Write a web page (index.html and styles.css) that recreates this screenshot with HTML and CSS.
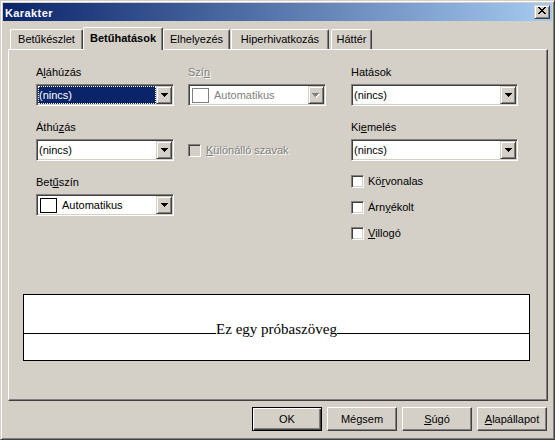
FILE: index.html
```html
<!DOCTYPE html>
<html lang="hu">
<head>
<meta charset="utf-8">
<title>Karakter</title>
<link rel="stylesheet" href="styles.css">
</head>
<body>
<div class="window">
  <div class="titlebar">
    <span class="title">Karakter</span>
    <button class="close" type="button">
      <svg width="8" height="7" viewBox="0 0 8 7"><path d="M0 0h2v1H0zM6 0h2v1H6zM1 1h2v1H1zM5 1h2v1H5zM2 2h4v1H2zM3 3h2v1H3zM2 4h4v1H2zM1 5h2v1H1zM5 5h2v1H5zM0 6h2v1H0zM6 6h2v1H6z"/></svg>
    </button>
  </div>

  <div class="tabs">
    <div class="tab tab-1">Betűkészlet</div>
    <div class="tab tab-2 active">Betűhatások</div>
    <div class="tab tab-3">Elhelyezés</div>
    <div class="tab tab-4">Hiperhivatkozás</div>
    <div class="tab tab-5">Háttér</div>
  </div>

  <div class="panel">
    <div class="fields">
      <div class="col col-1">
        <div class="field">
          <span class="label">A<u>l</u>áhúzás</span>
          <div class="combo">
            <span class="value selected">(nincs)</span>
            <span class="drop"><svg width="7" height="4" viewBox="0 0 7 4"><path d="M0 0h7v1H0zM1 1h5v1H1zM2 2h3v1H2zM3 3h1v1H3z"/></svg></span>
          </div>
        </div>
        <div class="field">
          <span class="label">Áthú<u>z</u>ás</span>
          <div class="combo">
            <span class="value">(nincs)</span>
            <span class="drop"><svg width="7" height="4" viewBox="0 0 7 4"><path d="M0 0h7v1H0zM1 1h5v1H1zM2 2h3v1H2zM3 3h1v1H3z"/></svg></span>
          </div>
        </div>
        <div class="field">
          <span class="label">Bet<u>ű</u>szín</span>
          <div class="combo">
            <span class="value"><span class="swatch"></span>Automatikus</span>
            <span class="drop"><svg width="7" height="4" viewBox="0 0 7 4"><path d="M0 0h7v1H0zM1 1h5v1H1zM2 2h3v1H2zM3 3h1v1H3z"/></svg></span>
          </div>
        </div>
      </div>

      <div class="col col-2">
        <div class="field">
          <span class="label disabled">Szí<u>n</u></span>
          <div class="combo">
            <span class="value muted"><span class="swatch swatch-off"></span>Automatikus</span>
            <span class="drop"><svg width="8" height="5" viewBox="0 0 8 5"><path fill="#fff" d="M1 1h7v1H1zM2 2h5v1H2zM3 3h3v1H3zM4 4h1v1H4z"/><path fill="#808080" d="M0 0h7v1H0zM1 1h5v1H1zM2 2h3v1H2zM3 3h1v1H3z"/></svg></span>
          </div>
        </div>
        <div class="check check-words">
          <span class="box box-off"></span>
          <span class="disabled"><u>K</u>ülönálló szavak</span>
        </div>
      </div>

      <div class="col col-3">
        <div class="field">
          <span class="label">Hatások</span>
          <div class="combo">
            <span class="value">(nincs)</span>
            <span class="drop"><svg width="7" height="4" viewBox="0 0 7 4"><path d="M0 0h7v1H0zM1 1h5v1H1zM2 2h3v1H2zM3 3h1v1H3z"/></svg></span>
          </div>
        </div>
        <div class="field">
          <span class="label">Ki<u>e</u>melés</span>
          <div class="combo">
            <span class="value">(nincs)</span>
            <span class="drop"><svg width="7" height="4" viewBox="0 0 7 4"><path d="M0 0h7v1H0zM1 1h5v1H1zM2 2h3v1H2zM3 3h1v1H3z"/></svg></span>
          </div>
        </div>
        <div class="checks">
          <div class="check"><span class="box"></span><span>Kö<u>r</u>vonalas</span></div>
          <div class="check"><span class="box"></span><span>Árn<u>y</u>ékolt</span></div>
          <div class="check"><span class="box"></span><span><u>V</u>illogó</span></div>
        </div>
      </div>
    </div>

    <div class="preview">
      <div class="baseline">
        <span class="rule"></span>
        <span class="sample">Ez egy próbaszöveg</span>
        <span class="rule"></span>
      </div>
    </div>
  </div>

  <div class="buttons">
    <button class="btn default" type="button">OK</button>
    <button class="btn" type="button">Mégsem</button>
    <button class="btn" type="button"><u>S</u>úgó</button>
    <button class="btn" type="button"><u>A</u>lapállapot</button>
  </div>
</div>
</body>
</html>
```

FILE: styles.css
```css
html, body {
  margin: 0;
  padding: 0;
  background: #d4d0c8;
}

body {
  font-family: "Liberation Sans", Arial, sans-serif;
  font-size: 11px;
  color: #000;
}

u {
  text-decoration: underline;
  text-underline-offset: 1px;
}

.window {
  width: 555px;
  height: 440px;
  box-sizing: border-box;
  border: 1px solid;
  border-color: #d4d0c8 #404040 #404040 #d4d0c8;
  box-shadow: inset 1px 1px #fff, inset -1px -1px #808080;
  padding: 2px;
  display: flex;
  flex-direction: column;
  background: #d4d0c8;
}

/* title bar */
.titlebar {
  height: 18px;
  flex: none;
  display: flex;
  align-items: center;
  justify-content: space-between;
  padding: 0 2px;
  background: linear-gradient(to right, #0a246a, #a6caf0);
}

.title {
  color: #fff;
  font-weight: bold;
  font-size: 11px;
  letter-spacing: 0.4px;
  line-height: 16px;
  padding-top: 2px;
}

.close {
  width: 16px;
  height: 14px;
  box-sizing: border-box;
  margin: 0;
  padding: 1px 0 0 0;
  border: 1px solid;
  border-color: #d4d0c8 #404040 #404040 #d4d0c8;
  box-shadow: inset 1px 1px #fff, inset -1px -1px #808080;
  background: #d4d0c8;
  display: flex;
  align-items: flex-start;
  justify-content: center;
}

.close svg {
  display: block;
  fill: #000;
}

/* tabs */
.tabs {
  flex: none;
  display: flex;
  align-items: flex-end;
  height: 22px;
  margin-top: 6px;
  padding-left: 7px;
}

.tab {
  box-sizing: border-box;
  height: 20px;
  padding-top: 3px;
  line-height: 13px;
  text-align: center;
  white-space: nowrap;
  background: #d4d0c8;
  border-top: 1px solid #fff;
  border-left: 1px solid #fff;
  border-right: 1px solid #404040;
  border-radius: 2px 2px 0 0;
  box-shadow: inset -1px 0 #808080;
}

.tab-1 { width: 73px; }
.tab-2 { width: 80px; }
.tab-3 { width: 67px; }
.tab-4 { width: 98px; margin-left: 1px; }
.tab-5 { width: 41px; margin-left: 2px; }

.tab.active {
  height: 23px;
  margin-bottom: -1px;
  padding-top: 4px;
  font-weight: bold;
  position: relative;
  z-index: 1;
}

/* panel */
.panel {
  flex: none;
  box-sizing: border-box;
  width: 540px;
  height: 352px;
  margin-left: 5px;
  padding: 16px 0 0 14px;
  border-top: 1px solid #fff;
  border-left: 1px solid #fff;
  border-right: 1px solid #404040;
  border-bottom: 1px solid #404040;
  box-shadow: inset -1px -1px #808080;
}

.fields {
  display: flex;
  align-items: flex-start;
  margin-left: 13px;
  height: 174px;
}

.col {
  display: flex;
  flex-direction: column;
  gap: 15px;
}

.col-1 { width: 138px; }
.col-2 { width: 138px; margin-left: 14px; gap: 0; }
.col-3 { width: 167px; margin-left: 25px; gap: 15px; }

.field {
  display: flex;
  flex-direction: column;
  gap: 5px;
}

.label {
  line-height: 13px;
  white-space: nowrap;
}

.disabled {
  color: #808080;
  text-shadow: 1px 1px #fff;
}

/* combo box */
.combo {
  box-sizing: border-box;
  height: 22px;
  padding: 1px;
  display: flex;
  background: #fff;
  border: 1px solid;
  border-color: #808080 #fff #fff #808080;
  box-shadow: inset 1px 1px #404040, inset -1px -1px #d4d0c8;
}

.value {
  flex: 1;
  display: flex;
  align-items: center;
  gap: 5px;
  line-height: 16px;
  border: 1px solid transparent;
  white-space: nowrap;
  overflow: hidden;
}

.value.selected {
  background: #0a246a;
  color: #fff;
  border: 1px dotted #fff;
}

.value.muted {
  color: #808080;
}

.swatch {
  flex: none;
  box-sizing: border-box;
  width: 17px;
  height: 15px;
  margin-left: 1px;
  border: 1px solid #000;
  background: #fff;
}

.swatch.swatch-off {
  border-color: #808080;
}

.drop {
  flex: none;
  box-sizing: border-box;
  width: 16px;
  height: 18px;
  display: flex;
  align-items: center;
  justify-content: center;
  background: #d4d0c8;
  border: 1px solid;
  border-color: #d4d0c8 #404040 #404040 #d4d0c8;
  box-shadow: inset 1px 1px #fff, inset -1px -1px #808080;
}

.drop svg {
  display: block;
  fill: #000;
}

/* check boxes */
.check {
  display: flex;
  align-items: center;
  gap: 4px;
  line-height: 13px;
  white-space: nowrap;
}

.check-words {
  margin-top: 38px;
  gap: 5px;
}

.checks {
  display: flex;
  flex-direction: column;
  gap: 13px;
  margin-top: -1px;
}

.box {
  flex: none;
  box-sizing: border-box;
  width: 13px;
  height: 13px;
  background: #fff;
  border: 1px solid;
  border-color: #808080 #fff #fff #808080;
  box-shadow: inset 1px 1px #404040, inset -1px -1px #d4d0c8;
}

.box.box-off {
  background: #d4d0c8;
}

/* preview */
.preview {
  box-sizing: border-box;
  width: 507px;
  height: 67px;
  margin-top: 54px;
  background: #fff;
  border: 1px solid #000;
}

.baseline {
  display: flex;
  align-items: baseline;
  margin-top: 25px;
}

.rule {
  flex: 1;
  height: 1px;
  background: #000;
}

.sample {
  font-family: "Liberation Serif", "Times New Roman", serif;
  font-size: 15px;
  line-height: 18px;
  white-space: nowrap;
}

/* buttons */
.buttons {
  flex: none;
  display: flex;
  justify-content: flex-end;
  gap: 5px;
  margin-top: 6px;
  padding-right: 5px;
}

.btn {
  box-sizing: border-box;
  width: 70px;
  height: 24px;
  margin: 0;
  padding: 0;
  font-family: "Liberation Sans", Arial, sans-serif;
  font-size: 11px;
  color: #000;
  background: #d4d0c8;
  border: 1px solid;
  border-color: #fff #404040 #404040 #fff;
  box-shadow: inset -1px -1px #808080;
}

.btn.default {
  border: 1px solid #000;
  box-shadow: inset 1px 1px #fff, inset -1px -1px #404040, inset -2px -2px #808080;
}
```
